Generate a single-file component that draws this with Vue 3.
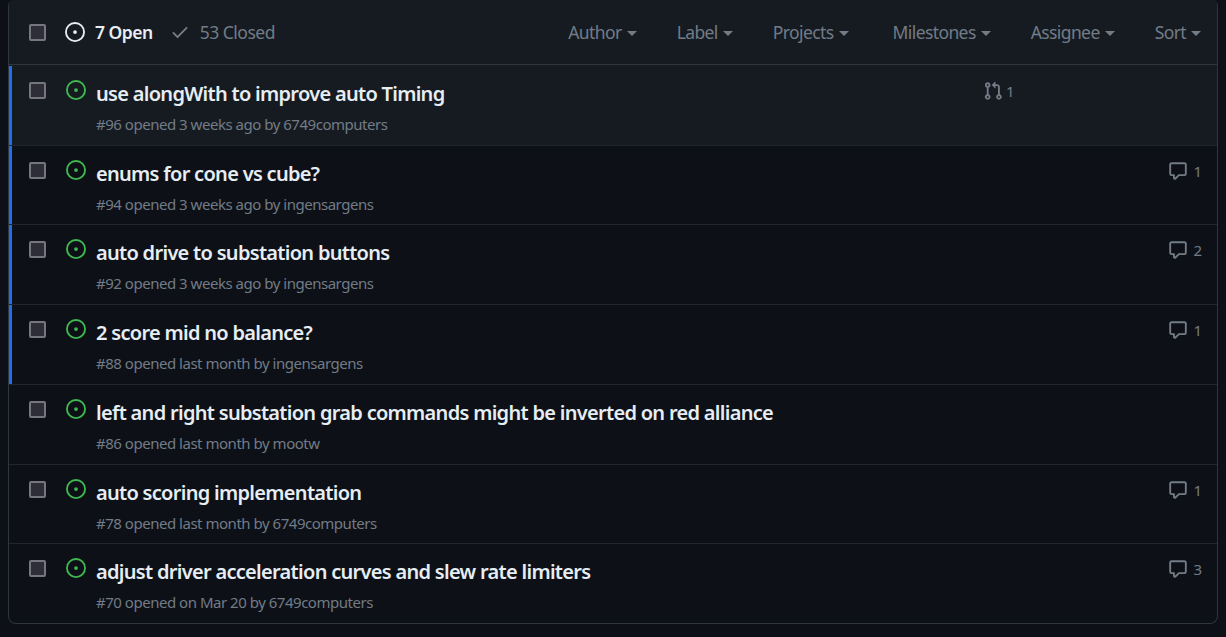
<template>
  <div class="issues-box">
    <div class="box-header">
      <span class="checkbox"></span>
      <div class="states">
        <a class="state selected">
          <svg width="20" height="20" viewBox="0 0 16 16"><path d="M8 9.5a1.5 1.5 0 1 0 0-3 1.5 1.5 0 0 0 0 3Z"/><path d="M8 0a8 8 0 1 1 0 16A8 8 0 0 1 8 0ZM1.5 8a6.5 6.5 0 1 0 13 0 6.5 6.5 0 0 0-13 0Z"/></svg>
          7 Open
        </a>
        <a class="state">
          <svg width="20" height="20" viewBox="0 0 16 16"><path d="M13.78 4.22a.75.75 0 0 1 0 1.06l-7.25 7.25a.75.75 0 0 1-1.06 0L2.22 9.28a.75.75 0 1 1 1.06-1.06L6 10.94l6.72-6.72a.75.75 0 0 1 1.06 0Z"/></svg>
          53 Closed
        </a>
      </div>
      <div class="filters">
        <a v-for="f in filters" :key="f" class="filter">{{ f }}<span class="caret"></span></a>
      </div>
    </div>
    <div v-for="issue in issues" :key="issue.num" class="row" :class="{ unread: issue.unread, hover: issue.hover }">
      <span class="checkbox"></span>
      <svg class="open-icon" width="20" height="20" viewBox="0 0 16 16"><path d="M8 9.5a1.5 1.5 0 1 0 0-3 1.5 1.5 0 0 0 0 3Z"/><path d="M8 0a8 8 0 1 1 0 16A8 8 0 0 1 8 0ZM1.5 8a6.5 6.5 0 1 0 13 0 6.5 6.5 0 0 0-13 0Z"/></svg>
      <div class="main">
        <a class="title">{{ issue.title }}</a>
        <div class="meta">{{ issue.meta }}</div>
      </div>
      <div class="linked">
        <template v-if="issue.prs">
          <svg width="20" height="20" viewBox="0 0 16 16"><path d="M1.5 3.25a2.25 2.25 0 1 1 3 2.122v5.256a2.251 2.251 0 1 1-1.5 0V5.372A2.25 2.25 0 0 1 1.5 3.25Zm5.677-.177L9.573.677A.25.25 0 0 1 10 .854V2.5h1A2.5 2.5 0 0 1 13.5 5v5.628a2.251 2.251 0 1 1-1.5 0V5a1 1 0 0 0-1-1h-1v1.646a.25.25 0 0 1-.427.177L7.177 3.427a.25.25 0 0 1 0-.354ZM3.75 2.5a.75.75 0 1 0 0 1.5.75.75 0 0 0 0-1.5Zm0 9.5a.75.75 0 1 0 0 1.5.75.75 0 0 0 0-1.5Zm8.25.75a.75.75 0 1 0 1.5 0 .75.75 0 0 0-1.5 0Z"/></svg>
          <span class="count">{{ issue.prs }}</span>
        </template>
      </div>
      <div class="comments">
        <template v-if="issue.comments">
          <svg width="20" height="20" viewBox="0 0 16 16"><path d="M1 2.75C1 1.784 1.784 1 2.75 1h10.5c.966 0 1.75.784 1.75 1.75v7.5A1.75 1.75 0 0 1 13.25 12H9.06l-2.573 2.573A1.458 1.458 0 0 1 4 13.543V12H2.75A1.75 1.75 0 0 1 1 10.25Zm1.75-.25a.25.25 0 0 0-.25.25v7.5c0 .138.112.25.25.25h2a.75.75 0 0 1 .75.75v2.19l2.72-2.72a.749.749 0 0 1 .53-.22h4.5a.25.25 0 0 0 .25-.25v-7.5a.25.25 0 0 0-.25-.25Z"/></svg>
          <span class="count">{{ issue.comments }}</span>
        </template>
      </div>
    </div>
  </div>
</template>

<script setup>
const filters = ['Author', 'Label', 'Projects', 'Milestones', 'Assignee', 'Sort']

const issues = [
  { num: 96, title: 'use alongWith to improve auto Timing', meta: '#96 opened 3 weeks ago by 6749computers', unread: true, hover: true, prs: 1 },
  { num: 94, title: 'enums for cone vs cube?', meta: '#94 opened 3 weeks ago by ingensargens', unread: true, comments: 1 },
  { num: 92, title: 'auto drive to substation buttons', meta: '#92 opened 3 weeks ago by ingensargens', unread: true, comments: 2 },
  { num: 88, title: '2 score mid no balance?', meta: '#88 opened last month by ingensargens', unread: true, comments: 1 },
  { num: 86, title: 'left and right substation grab commands might be inverted on red alliance', meta: '#86 opened last month by mootw' },
  { num: 78, title: 'auto scoring implementation', meta: '#78 opened last month by 6749computers', comments: 1 },
  { num: 70, title: 'adjust driver acceleration curves and slew rate limiters', meta: '#70 opened on Mar 20 by 6749computers', comments: 3 }
]
</script>

<style>
html, body {
  background: #0d1117;
  overflow: hidden;
}
</style>

<style scoped>
.issues-box {
  width: 1210px;
  height: 624px;
  margin-left: 8px;
  box-sizing: border-box;
  border: 1px solid #30363d;
  border-top: 0;
  border-radius: 6px 6px 8px 8px;
  font-family: "Noto Sans", "Open Sans", sans-serif;
  overflow: hidden;
}

.box-header {
  display: flex;
  align-items: center;
  height: 64px;
  padding-left: 20px;
  background: #161b22;
  border-bottom: 1px solid #30363d;
}

.checkbox {
  flex: none;
  width: 13px;
  height: 13px;
  background: #2e2e38;
  border: 2px solid #767680;
  border-radius: 2px;
}

.states {
  display: flex;
  align-items: center;
  margin-left: 19px;
  gap: 17px;
}

.state {
  display: flex;
  align-items: center;
  gap: 10px;
  font-size: 17.5px;
  letter-spacing: -0.5px;
  color: #727b86;
}

.state svg {
  fill: currentColor;
}

.state.selected {
  color: #e6edf3;
  font-weight: 600;
}

.filters {
  display: flex;
  margin-left: auto;
  margin-right: 16px;
  gap: 40px;
}

.filter {
  display: flex;
  align-items: center;
  font-size: 17.5px;
  letter-spacing: -0.6px;
  color: #727b86;
}

.filter:nth-child(4) {
  margin-left: 4px;
}

.caret {
  width: 0;
  height: 0;
  margin-left: 5px;
  margin-top: 2px;
  border: 5px solid transparent;
  border-top-color: #727b86;
  border-bottom: 0;
}

.row {
  display: flex;
  align-items: flex-start;
  height: 79.72px;
  box-sizing: border-box;
  padding: 15px 0 0 20px;
  border-top: 1px solid #21262d;
  position: relative;
}

.box-header + .row {
  border-top-color: transparent;
}

.row.hover {
  background: #161b22;
}

.row.unread::before {
  content: "";
  position: absolute;
  left: 0;
  top: 0;
  bottom: 0;
  width: 3px;
  background: #1f6feb;
}

.row .checkbox {
  margin-top: 1px;
}

.open-icon {
  flex: none;
  margin-left: 20px;
  margin-top: -1px;
  fill: #3fb950;
}

.main {
  flex: 1;
  min-width: 0;
  margin-left: 10px;
}

.title {
  display: block;
  font-size: 20px;
  font-weight: 600;
  line-height: 26px;
  letter-spacing: -0.7px;
  color: #e6edf3;
}

.meta {
  margin-top: 7px;
  font-size: 15px;
  line-height: 20px;
  letter-spacing: -0.48px;
  color: #727b86;
}

.linked, .comments {
  display: flex;
  align-items: center;
  font-size: 15px;
  color: #727b86;
}

.linked {
  width: 187px;
}

.comments {
  justify-content: flex-end;
  width: 32px;
  margin-right: 15px;
}

.linked svg, .comments svg {
  fill: currentColor;
  flex: none;
}

.count {
  margin-left: 5px;
}

.linked .count {
  margin-left: 3px;
}
</style>
